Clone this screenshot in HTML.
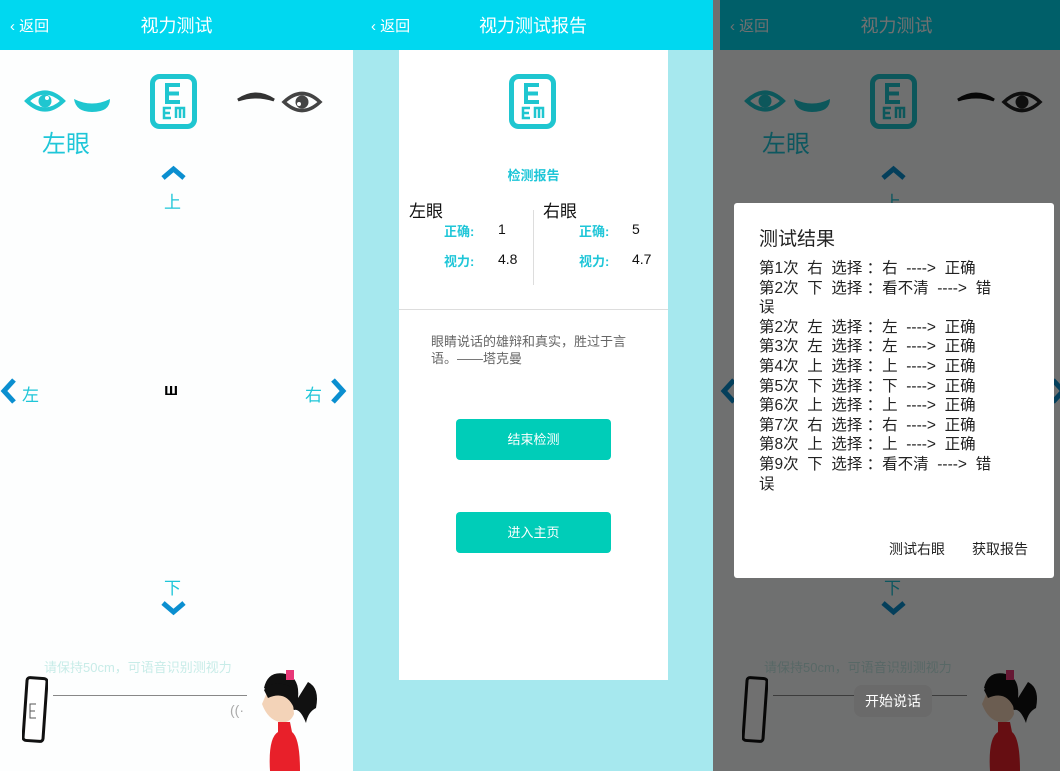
<!DOCTYPE html>
<html><head><meta charset="utf-8"><style>
*{margin:0;padding:0;box-sizing:border-box}
body{width:1060px;height:771px;overflow:hidden;position:relative;background:#fff;font-family:"Liberation Sans","Noto Sans CJK SC",sans-serif}
.abs{position:absolute}
.hdr{position:absolute;top:0;height:50px;background:#00d8f0;color:#fff}
.hdr .back{position:absolute;left:10px;top:15px;font-size:15px}
.hdr .t{position:absolute;top:12px;font-size:18px;width:100%;text-align:center;left:0}
.p1{position:absolute;left:0;top:0;width:353px;height:771px;background:#fdfefe;overflow:hidden}
.cy{color:#1fc6d8}
.blue{color:#0b8fd0}
</style></head><body>

<!-- Panel 1 template -->
<div class="p1" id="p1">
 <div class="hdr" style="left:0;width:353px"><div class="back">&lsaquo; 返回</div><div class="t">视力测试</div></div>
 <svg class="abs" style="left:24px;top:86px" width="90" height="30" viewBox="0 0 90 30">
  <path d="M3 15 Q21 -2 39 15 Q21 32 3 15Z" fill="none" stroke="#1fc6d0" stroke-width="4"/>
  <circle cx="21" cy="15" r="6.5" fill="#1fc6d0"/><circle cx="23" cy="12" r="2" fill="#fff"/>
  <path d="M50 13 Q68 22 86 13 Q86 26 68 26 Q52 26 50 13Z" fill="#1fc6d0"/>
 </svg>
 <div class="abs cy" style="left:42px;top:124px;font-size:24px">左眼</div>
 <svg class="abs" style="left:150px;top:74px" width="47" height="55" viewBox="0 0 47 55">
  <rect x="2.5" y="2.5" width="42" height="50" rx="7" fill="none" stroke="#1fc6d0" stroke-width="5"/>
  <path d="M30 11H17v17h13M17 19.5h12" fill="none" stroke="#1fc6d0" stroke-width="4"/>
  <path d="M21 34h-7v10h7M14 39h6M26 44v-10h8v10M30 34v10" fill="none" stroke="#1fc6d0" stroke-width="2.5"/>
 </svg>
 <svg class="abs" style="left:236px;top:88px" width="88" height="28" viewBox="0 0 88 28">
  <path d="M2 12 Q20 0 38 12 Q20 6 2 12Z" fill="#333" stroke="#333" stroke-width="3"/>
  <path d="M48 14 Q66 -3 84 14 Q66 31 48 14Z" fill="none" stroke="#444" stroke-width="3.5"/>
  <circle cx="66" cy="14" r="6.5" fill="#444"/><circle cx="63" cy="16" r="2" fill="#fff"/>
 </svg>
 <svg class="abs" style="left:160px;top:165px" width="27" height="16" viewBox="0 0 27 16"><path d="M3 13L13.5 4L24 13" fill="none" stroke="#0b8fd0" stroke-width="5"/></svg>
 <div class="abs cy" style="left:164px;top:188px;font-size:17px">上</div>
 <svg class="abs" style="left:0px;top:377px" width="18" height="28" viewBox="0 0 18 28"><path d="M14 3L4 14L14 25" fill="none" stroke="#0b8fd0" stroke-width="5"/></svg>
 <div class="abs cy" style="left:22px;top:381px;font-size:17px">左</div>
 <div class="abs" style="left:164px;top:380px;font-size:17px;font-weight:bold;color:#000">ш</div>
 <div class="abs cy" style="left:305px;top:381px;font-size:17px">右</div>
 <svg class="abs" style="left:329px;top:377px" width="18" height="28" viewBox="0 0 18 28"><path d="M4 3L14 14L4 25" fill="none" stroke="#0b8fd0" stroke-width="5"/></svg>
 <div class="abs cy" style="left:164px;top:574px;font-size:17px">下</div>
 <svg class="abs" style="left:160px;top:600px" width="27" height="16" viewBox="0 0 27 16"><path d="M3 3L13.5 12L24 3" fill="none" stroke="#0b8fd0" stroke-width="5"/></svg>
 <div class="abs" style="left:44px;top:657px;font-size:13px;color:#c8ece8">请保持50cm，可语音识别测视力</div>
 <svg class="abs" style="left:22px;top:676px" width="26" height="68" viewBox="0 0 26 68">
  <rect x="3" y="2" width="20" height="63" rx="3" transform="rotate(4 13 34)" fill="#fff" stroke="#111" stroke-width="3"/>
  <path d="M14 28h-6v14h6M8 35h5" fill="none" stroke="#555" stroke-width="1"/>
 </svg>
 <div class="abs" style="left:53px;top:695px;width:194px;height:1px;background:#888"></div>
 <div class="abs" style="left:230px;top:702px;font-size:14px;color:#aaa">((·</div>
 <svg class="abs" style="left:250px;top:668px" width="75" height="103" viewBox="0 0 75 103">
  <path d="M14 20 Q18 2 36 6 Q50 10 48 30 L58 14 Q70 20 66 40 Q58 44 56 55 Q50 40 44 42 Z" fill="#111"/>
  <path d="M18 22 Q30 14 42 24 L44 46 Q40 56 30 54 Q18 52 12 36 Z" fill="#f3d3b8"/>
  <path d="M14 22 Q24 10 44 20 L44 40 Q36 22 18 30Z" fill="#111"/>
  <rect x="36" y="2" width="8" height="10" fill="#e83878"/>
  <path d="M28 54 L40 54 L42 64 Q50 70 50 103 L20 103 Q18 70 28 64Z" fill="#e8202a"/>
 </svg>
</div>

<!-- Panel 2 -->
<div class="abs" style="left:353px;top:0;width:360px;height:771px;background:#a6e8ee">
 <div class="hdr" style="left:0;width:360px"><div class="back" style="left:18px">&lsaquo; 返回</div><div class="t">视力测试报告</div></div>
 <div class="abs" style="left:46px;top:50px;width:269px;height:630px;background:#fff">
  <svg class="abs" style="left:110px;top:24px" width="47" height="55" viewBox="0 0 47 55">
   <rect x="2.5" y="2.5" width="42" height="50" rx="7" fill="none" stroke="#1fc6d0" stroke-width="5"/>
   <path d="M30 11H17v17h13M17 19.5h12" fill="none" stroke="#1fc6d0" stroke-width="4"/>
   <path d="M21 34h-7v10h7M14 39h6M26 44v-10h8v10M30 34v10" fill="none" stroke="#1fc6d0" stroke-width="2.5"/>
  </svg>
  <div class="abs cy" style="left:0;width:269px;text-align:center;top:115px;font-size:13px;font-weight:bold">检测报告</div>
  <div class="abs" style="left:10px;top:147px;font-size:17px;color:#111">左眼</div>
  <div class="abs" style="left:144px;top:147px;font-size:17px;color:#111">右眼</div>
  <div class="abs" style="left:134px;top:160px;width:1px;height:75px;background:#ddd"></div>
  <div class="abs cy" style="left:45px;top:171px;font-size:13px;font-weight:bold">正确:</div>
  <div class="abs" style="left:99px;top:171px;font-size:14px;color:#111">1</div>
  <div class="abs cy" style="left:45px;top:201px;font-size:13px;font-weight:bold">视力:</div>
  <div class="abs" style="left:99px;top:201px;font-size:14px;color:#111">4.8</div>
  <div class="abs cy" style="left:180px;top:171px;font-size:13px;font-weight:bold">正确:</div>
  <div class="abs" style="left:233px;top:171px;font-size:14px;color:#111">5</div>
  <div class="abs cy" style="left:180px;top:201px;font-size:13px;font-weight:bold">视力:</div>
  <div class="abs" style="left:233px;top:201px;font-size:14px;color:#111">4.7</div>
  <div class="abs" style="left:0;top:259px;width:269px;height:1px;background:#ddd"></div>
  <div class="abs" style="left:32px;top:283px;width:205px;font-size:13px;line-height:17px;color:#666">眼睛说话的雄辩和真实，胜过于言语。——塔克曼</div>
  <div class="abs" style="left:57px;top:369px;width:155px;height:41px;border-radius:4px;background:#00cdb8;color:#fff;font-size:13px;text-align:center;line-height:41px">结束检测</div>
  <div class="abs" style="left:57px;top:462px;width:155px;height:41px;border-radius:4px;background:#00cdb8;color:#fff;font-size:13px;text-align:center;line-height:41px">进入主页</div>
 </div>
</div>

<!-- Panel 3 -->
<div class="abs" style="left:713px;top:0;width:347px;height:771px;overflow:hidden;background:#fdfefe">
 <div class="p1" style="left:7px;width:353px">
  <div class="hdr" style="left:0;width:353px"><div class="back">&lsaquo; 返回</div><div class="t">视力测试</div></div>
  <svg class="abs" style="left:24px;top:86px" width="90" height="30" viewBox="0 0 90 30">
   <path d="M3 15 Q21 -2 39 15 Q21 32 3 15Z" fill="none" stroke="#1fc6d0" stroke-width="4"/>
   <circle cx="21" cy="15" r="6.5" fill="#1fc6d0"/>
   <path d="M50 13 Q68 22 86 13 Q86 26 68 26 Q52 26 50 13Z" fill="#1fc6d0"/>
  </svg>
  <div class="abs cy" style="left:42px;top:124px;font-size:24px">左眼</div>
  <svg class="abs" style="left:150px;top:74px" width="47" height="55" viewBox="0 0 47 55">
   <rect x="2.5" y="2.5" width="42" height="50" rx="7" fill="none" stroke="#1fc6d0" stroke-width="5"/>
   <path d="M30 11H17v17h13M17 19.5h12" fill="none" stroke="#1fc6d0" stroke-width="4"/>
   <path d="M21 34h-7v10h7M14 39h6M26 44v-10h8v10M30 34v10" fill="none" stroke="#1fc6d0" stroke-width="2.5"/>
  </svg>
  <svg class="abs" style="left:236px;top:88px" width="88" height="28" viewBox="0 0 88 28">
   <path d="M2 12 Q20 0 38 12 Q20 6 2 12Z" fill="#111" stroke="#111" stroke-width="3"/>
   <path d="M48 14 Q66 -3 84 14 Q66 31 48 14Z" fill="none" stroke="#222" stroke-width="3.5"/>
   <circle cx="66" cy="14" r="6.5" fill="#222"/>
  </svg>
  <svg class="abs" style="left:160px;top:165px" width="27" height="16" viewBox="0 0 27 16"><path d="M3 13L13.5 4L24 13" fill="none" stroke="#0b8fd0" stroke-width="5"/></svg>
  <div class="abs cy" style="left:164px;top:188px;font-size:17px">上</div>
  <svg class="abs" style="left:0px;top:377px" width="18" height="28" viewBox="0 0 18 28"><path d="M14 3L4 14L14 25" fill="none" stroke="#0b8fd0" stroke-width="5"/></svg>
  <svg class="abs" style="left:329px;top:377px" width="18" height="28" viewBox="0 0 18 28"><path d="M4 3L14 14L4 25" fill="none" stroke="#0b8fd0" stroke-width="5"/></svg>
  <div class="abs cy" style="left:164px;top:574px;font-size:17px">下</div>
  <svg class="abs" style="left:160px;top:600px" width="27" height="16" viewBox="0 0 27 16"><path d="M3 3L13.5 12L24 3" fill="none" stroke="#0b8fd0" stroke-width="5"/></svg>
  <div class="abs" style="left:44px;top:657px;font-size:13px;color:#c8ece8">请保持50cm，可语音识别测视力</div>
  <svg class="abs" style="left:22px;top:676px" width="26" height="68" viewBox="0 0 26 68">
   <rect x="3" y="2" width="20" height="63" rx="3" transform="rotate(4 13 34)" fill="#fff" stroke="#111" stroke-width="3"/>
  </svg>
  <div class="abs" style="left:53px;top:695px;width:194px;height:1px;background:#888"></div>
  <svg class="abs" style="left:250px;top:668px" width="75" height="103" viewBox="0 0 75 103">
   <path d="M14 20 Q18 2 36 6 Q50 10 48 30 L58 14 Q70 20 66 40 Q58 44 56 55 Q50 40 44 42 Z" fill="#111"/>
   <path d="M18 22 Q30 14 42 24 L44 46 Q40 56 30 54 Q18 52 12 36 Z" fill="#f3d3b8"/>
   <path d="M14 22 Q24 10 44 20 L44 40 Q36 22 18 30Z" fill="#111"/>
   <rect x="36" y="2" width="8" height="10" fill="#e83878"/>
   <path d="M28 54 L40 54 L42 64 Q50 70 50 103 L20 103 Q18 70 28 64Z" fill="#e8202a"/>
  </svg>
 </div>
 <div class="abs" style="left:0;top:0;width:347px;height:771px;background:rgba(0,0,0,0.56)"></div>
 <div class="abs" style="left:141px;top:685px;width:78px;height:32px;border-radius:8px;background:#6a6a6a;color:#fff;font-size:14px;text-align:center;line-height:32px">开始说话</div>
 <div class="abs" style="left:21px;top:203px;width:320px;height:375px;background:#fff;border-radius:3px">
  <div class="abs" style="left:25px;top:21px;font-size:19px;color:#222">测试结果</div>
  <div class="abs" style="left:25px;top:56px;font-size:15.5px;line-height:19.6px;color:#222;white-space:pre">第1次  右  选择 ：右  ----&gt;  正确
第2次  下  选择 ：看不清  ----&gt;  错
误
第2次  左  选择 ：左  ----&gt;  正确
第3次  左  选择 ：左  ----&gt;  正确
第4次  上  选择 ：上  ----&gt;  正确
第5次  下  选择 ：下  ----&gt;  正确
第6次  上  选择 ：上  ----&gt;  正确
第7次  右  选择 ：右  ----&gt;  正确
第8次  上  选择 ：上  ----&gt;  正确
第9次  下  选择 ：看不清  ----&gt;  错
误</div>
  <div class="abs" style="left:155px;top:336px;font-size:14px;color:#222">测试右眼</div>
  <div class="abs" style="left:238px;top:336px;font-size:14px;color:#222">获取报告</div>
 </div>
</div>
</body></html>
